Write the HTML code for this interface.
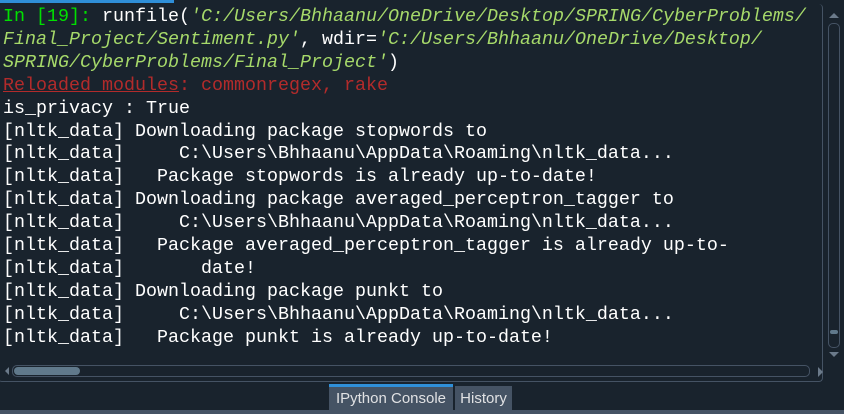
<!DOCTYPE html><html><head><style>
body{margin:0;width:844px;height:414px;background:#19232d;overflow:hidden;position:relative;font-family:"Liberation Mono",monospace}
pre{margin:0;position:absolute;left:3px;top:6px;font-family:"Liberation Mono",monospace;font-size:18.33px;line-height:22.9px;color:#fff}
.g{color:#00e000}.s{color:#a6d96a;font-style:italic}.r{color:#b22b2b}
</style></head><body>
<div style="position:absolute;left:0;top:0;width:174px;height:3px;background:#2f8fd8"></div>
<pre><span class="g">In [19]:</span> runfile(<span class="s">'C:/Users/Bhhaanu/OneDrive/Desktop/SPRING/CyberProblems/
Final_Project/Sentiment.py'</span>, wdir=<span class="s">'C:/Users/Bhhaanu/OneDrive/Desktop/
SPRING/CyberProblems/Final_Project'</span>)
<span class="r"><u>Reloaded modules</u>: commonregex, rake</span>
is_privacy : True
[nltk_data] Downloading package stopwords to
[nltk_data]     C:\Users\Bhhaanu\AppData\Roaming\nltk_data...
[nltk_data]   Package stopwords is already up-to-date!
[nltk_data] Downloading package averaged_perceptron_tagger to
[nltk_data]     C:\Users\Bhhaanu\AppData\Roaming\nltk_data...
[nltk_data]   Package averaged_perceptron_tagger is already up-to-
[nltk_data]       date!
[nltk_data] Downloading package punkt to
[nltk_data]     C:\Users\Bhhaanu\AppData\Roaming\nltk_data...
[nltk_data]   Package punkt is already up-to-date!</pre>
<div style="position:absolute;left:-2px;top:4px;width:824px;height:377px;border:1px solid #455364;border-radius:4px;border-left:none;border-top:none"></div>
<div style="position:absolute;left:829px;top:13px;width:0;height:0;border-left:5px solid transparent;border-right:5px solid transparent;border-bottom:5px solid #6b7a8a"></div>
<div style="position:absolute;left:828px;top:23px;width:10px;height:323px;border:1px solid #455364;border-radius:5px"></div>
<div style="position:absolute;left:830px;top:330px;width:8px;height:4px;background:#60798b;border-radius:4px"></div>
<div style="position:absolute;left:829px;top:352px;width:0;height:0;border-left:5px solid transparent;border-right:5px solid transparent;border-top:5px solid #6b7a8a"></div>
<div style="position:absolute;left:5px;top:367px;width:0;height:0;border-top:4px solid transparent;border-bottom:4px solid transparent;border-right:4px solid #6b7a8a"></div>
<div style="position:absolute;left:12px;top:365px;width:796px;height:10px;border:1px solid #455364;border-radius:5px"></div>
<div style="position:absolute;left:14px;top:367px;width:66px;height:8px;background:#60798b;border-radius:4px"></div>
<div style="position:absolute;left:818px;top:367px;width:0;height:0;border-top:5px solid transparent;border-bottom:5px solid transparent;border-left:5px solid #6b7a8a"></div>
<div style="position:absolute;left:329px;top:384px;width:124px;height:26px;background:#455364;border-top:3px solid #2f8fd8;box-sizing:border-box;color:#e0e1e3;font-family:'Liberation Sans',sans-serif;font-size:15px;line-height:24px;text-align:center">IPython Console</div>
<div style="position:absolute;left:455px;top:386px;width:57px;height:24px;background:#455364;color:#e0e1e3;font-family:'Liberation Sans',sans-serif;font-size:15px;line-height:26px;text-align:center">History</div>
<div style="position:absolute;left:0;top:410px;width:844px;height:4px;background:#455364"></div>
</body></html>
